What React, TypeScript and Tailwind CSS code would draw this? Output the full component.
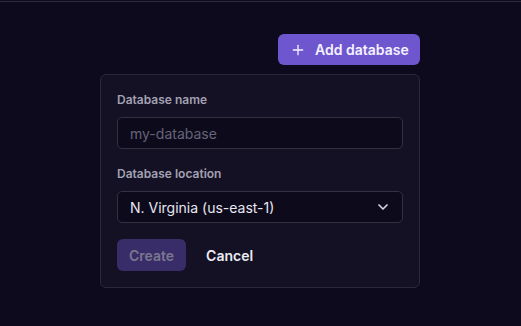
import { Plus, ChevronDown } from "lucide-react";

export default function App() {
  return (
    <div
      className="w-[521px] h-[326px] bg-[#0c0a1c] overflow-hidden"
      style={{ fontFamily: "Inter, 'Noto Sans', sans-serif" }}
    >
      <div className="pt-px">
        <div className="h-px bg-[#2c2a3c]" />
      </div>

      <div className="ml-[100px] w-[320px] pt-[32px] flex flex-col items-end gap-[9px]">
        <button className="h-[31px] w-[142px] flex items-center gap-[9px] pl-[12px] rounded-md bg-[#6e56cf] text-[#f4f2ff] text-[14px] font-semibold">
          <Plus size={16} strokeWidth={2} />
          Add database
        </button>

        <div className="w-[320px] self-start rounded-md border border-[#2a2839] bg-[#131123] p-[16px] flex flex-col">
          <label className="text-[12px] leading-[18px] font-semibold text-[#a3a1b3]">Database name</label>
          <input
            className="mt-[8px] h-[32px] w-full rounded-[5px] border border-[#33313f] bg-[#0d0b1b] px-[12px] text-[14px] text-[#e4e2ee] placeholder:text-[#66637a] outline-none"
            placeholder="my-database"
          />

          <label className="mt-[16px] text-[12px] leading-[18px] font-semibold text-[#a3a1b3]">Database location</label>
          <div className="mt-[8px] h-[32px] w-full rounded-[5px] border border-[#33313f] bg-[#0d0b1b] pl-[12px] pr-[11px] flex items-center justify-between text-[14px] text-[#e8e6f2]">
            <span>N. Virginia (us-east-1)</span>
            <ChevronDown size={16} strokeWidth={2.5} className="text-[#d8d6e4]" />
          </div>

          <div className="mt-[16px] flex items-center gap-[4px]">
            <button className="h-[32px] px-[12px] rounded-md bg-[#382d68] text-[#7b778f] text-[14px] font-semibold">
              Create
            </button>
            <button className="h-[32px] px-[16px] rounded-md text-[#ecebf3] text-[14px] font-semibold">
              Cancel
            </button>
          </div>
        </div>
      </div>
    </div>
  );
}
